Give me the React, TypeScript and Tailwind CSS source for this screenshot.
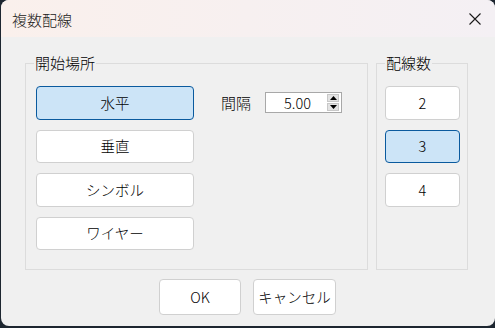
import type { ReactNode } from "react";

const font = { fontFamily: '"Noto Sans CJK JP", "Noto Sans", sans-serif' };

function Btn({ children, active, className }: { children: ReactNode; active?: boolean; className: string }) {
  return (
    <div
      className={
        "flex items-center justify-center rounded-[4px] border text-[14.5px] leading-none font-light text-black " +
        (active ? "bg-[#cce4f7] border-[#0a5a9e] " : "bg-white border-[#d0d0d0] ") +
        className
      }
    >
      {children}
    </div>
  );
}

function Group({ label, children, className }: { label: string; children: ReactNode; className: string }) {
  return (
    <div className={"relative border border-[#dcdcdc] " + className}>
      {/* 枠線にかぶせるラベル */}
      <span className="absolute left-[8px] top-[-11px] bg-[#f0f0f0] px-[1px] text-[15px] leading-[20px] font-light text-black">
        {label}
      </span>
      {children}
    </div>
  );
}

export default function App() {
  return (
    <div className="w-[495px] h-[328px] bg-[#1d2630] pl-[1px] overflow-hidden" style={font}>
      <div className="w-[494px] h-[326px] rounded-[8px] overflow-hidden flex flex-col bg-[#f0f0f0]">
        {/* タイトルバー */}
        <div className="h-[37px] flex-shrink-0 flex items-center justify-between pl-[11px] pr-[14px] bg-gradient-to-r from-[#faf0ec] to-[#f4f0f4]">
          <span className="text-[15px] leading-none font-light text-[#1a1a1a] mt-[2px]">複数配線</span>
          <svg width="12" height="12" viewBox="0 0 12 12" className="mt-[1px]">
            <path d="M0.5 0.5 L11.5 11.5 M11.5 0.5 L0.5 11.5" stroke="#1a1a1a" strokeWidth="1.1" />
          </svg>
        </div>

        {/* 本体 */}
        <div className="flex-1 flex flex-col pt-[26px] pl-[24px]">
          <div className="flex gap-[8px]">
            <Group label="開始場所" className="w-[343px] h-[207px] pt-[22px] pl-[10px]">
              <div className="flex gap-[27px]">
                <div className="flex flex-col gap-[10px]">
                  <Btn active className="w-[158px] h-[33.5px]">水平</Btn>
                  <Btn className="w-[158px] h-[33.5px]">垂直</Btn>
                  <Btn className="w-[158px] h-[33.5px]">シンボル</Btn>
                  <Btn className="w-[158px] h-[33.5px]">ワイヤー</Btn>
                </div>
                <div className="flex items-center h-[33.5px] gap-[14px]">
                  <span className="text-[15px] leading-none font-light text-black">間隔</span>
                  <div className="w-[77px] h-[21px] border border-[#a8a8a8] bg-white flex">
                    <div className="flex-1 flex items-center justify-center text-[14.5px] leading-none font-light text-black pl-[2px]">
                      5.00
                    </div>
                    <div className="w-[14px] flex flex-col py-[1px] pr-[2px] gap-[1px]">
                      <div className="flex-1 bg-[#e3e3e3] border border-[#c8c8c8] flex items-center justify-center">
                        <svg width="7" height="4" viewBox="0 0 7 4">
                          <path d="M3.5 0 L7 4 L0 4 Z" fill="#000" />
                        </svg>
                      </div>
                      <div className="flex-1 bg-[#e3e3e3] border border-[#c8c8c8] flex items-center justify-center">
                        <svg width="7" height="4" viewBox="0 0 7 4">
                          <path d="M0 0 L7 0 L3.5 4 Z" fill="#000" />
                        </svg>
                      </div>
                    </div>
                  </div>
                </div>
              </div>
            </Group>

            <Group label="配線数" className="w-[92px] h-[207px] pt-[22px] pl-[8px]">
              <div className="flex flex-col gap-[10px]">
                <Btn className="w-[75px] h-[33.5px]">2</Btn>
                <Btn active className="w-[75px] h-[33.5px]">3</Btn>
                <Btn className="w-[75px] h-[33.5px]">4</Btn>
              </div>
            </Group>
          </div>

          {/* OK / キャンセル */}
          <div className="flex gap-[12px] mt-[9px] pl-[134px]">
            <Btn className="w-[82px] h-[36px]">OK</Btn>
            <Btn className="w-[83px] h-[36px]">キャンセル</Btn>
          </div>
        </div>
      </div>
    </div>
  );
}
